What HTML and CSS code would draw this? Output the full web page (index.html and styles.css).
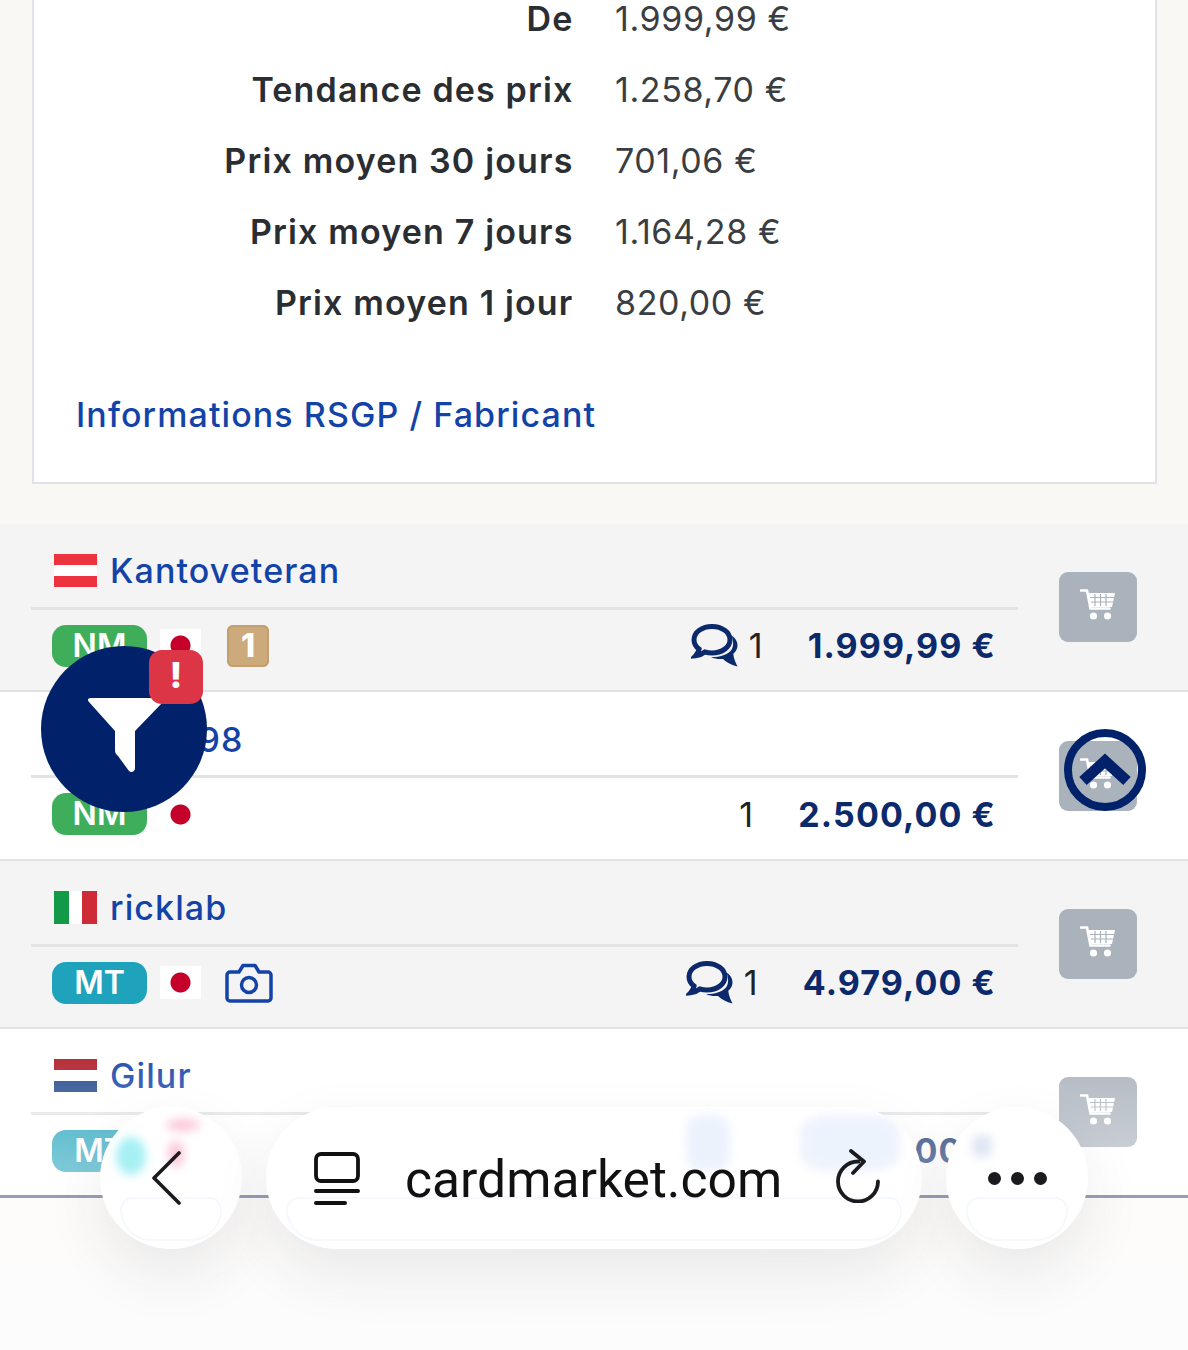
FILE: index.html
```html
<!DOCTYPE html>
<html lang="fr">
<head>
<meta charset="utf-8">
<title>Cardmarket</title>
<link rel="stylesheet" href="styles.css">
</head>
<body>
<svg class="defs" width="0" height="0" aria-hidden="true">
  <symbol id="cart" viewBox="0 0 36 34">
    <path d="M1 3.500h6l3.500 18h19" fill="none" stroke="currentColor" stroke-width="2.600" stroke-linecap="round"/>
    <path d="M8 6h27l-3 14H10.500z" fill="currentColor"/>
    <path d="M10 10.500h24M11 15h22M15 7v12M20.500 7v12M26 7v12" stroke="#aab2bc" stroke-width="1.200"/>
    <circle cx="13.500" cy="29" r="3.600" fill="currentColor"/>
    <circle cx="27.500" cy="29" r="3.600" fill="currentColor"/>
  </symbol>
  <symbol id="chat" viewBox="0 0 48 44">
    <path d="M21 2.500c10 0 18 5.800 18 13.200S31 29 21 29c-2.600 0-5-.4-7.200-1-2.500 2-5.500 3.400-9.300 3.800 1.800-2 3.200-4.300 3.600-6.700C4.800 22.700 3 19.400 3 15.700 3 8.300 11 2.500 21 2.500z" fill="none" stroke="currentColor" stroke-width="5"/>
    <path d="M40.500 11.500c4 2.600 6 6 6 9.700 0 3.300-1.600 6.200-4.200 8.500.3 3.800 1.700 8 4.200 12.800-6-1.300-10.800-4-14.500-7.500-4.500.4-8.500-.3-12-2 8 .2 15-1.500 19.500-6 3-3.200 3.500-9 1-15.500z" fill="currentColor"/>
  </symbol>
</svg>

<section class="card">
  <dl class="prices">
    <dt>De</dt><dd>1.999,99 €</dd>
    <dt>Tendance des prix</dt><dd>1.258,70 €</dd>
    <dt>Prix moyen 30 jours</dt><dd>701,06 €</dd>
    <dt>Prix moyen 7 jours</dt><dd>1.164,28 €</dd>
    <dt>Prix moyen 1 jour</dt><dd>820,00 €</dd>
  </dl>
  <a class="rsgp" href="#">Informations RSGP / Fabricant</a>
</section>

<main class="offers">
  <article class="offer shaded">
    <div class="offer-main">
      <div class="seller"><span class="flag flag-at"></span><a href="#">Kantoveteran</a></div>
      <div class="details">
        <span class="cond nm">NM</span><span class="jp"></span>
        <span class="first-ed">1</span>
        <span class="meta"><svg class="chat"><use href="#chat"/></svg><span class="qty">1</span><b class="price">1.999,99 €</b></span>
      </div>
    </div>
    <button class="buy" aria-label="Ajouter au panier"><svg class="cart"><use href="#cart"/></svg></button>
  </article>

  <article class="offer">
    <div class="offer-main">
      <div class="seller"><span class="flag flag-de"></span><a href="#">Hoke98</a></div>
      <div class="details">
        <span class="cond nm">NM</span><span class="jp"></span>
        <span class="meta"><span class="qty">1</span><b class="price">2.500,00 €</b></span>
      </div>
    </div>
    <button class="buy" aria-label="Ajouter au panier"><svg class="cart"><use href="#cart"/></svg></button>
  </article>

  <article class="offer shaded">
    <div class="offer-main">
      <div class="seller"><span class="flag flag-it"></span><a href="#">ricklab</a></div>
      <div class="details">
        <span class="cond mt">MT</span><span class="jp"></span>
        <svg class="camera" viewBox="0 0 48 40" aria-hidden="true"><path d="M5 9h9l4-6.500h12L34 9h9a3 3 0 0 1 3 3v23a3 3 0 0 1-3 3H5a3 3 0 0 1-3-3V12a3 3 0 0 1 3-3z" fill="none" stroke="currentColor" stroke-width="3.500" stroke-linejoin="round"/><circle cx="24" cy="22" r="7.500" fill="none" stroke="currentColor" stroke-width="3.500"/></svg>
        <span class="meta"><svg class="chat"><use href="#chat"/></svg><span class="qty">1</span><b class="price">4.979,00 €</b></span>
      </div>
    </div>
    <button class="buy" aria-label="Ajouter au panier"><svg class="cart"><use href="#cart"/></svg></button>
  </article>

  <article class="offer last">
    <div class="offer-main">
      <div class="seller"><span class="flag flag-nl"></span><a href="#">Gilur</a></div>
      <div class="details">
        <span class="cond mt">MT</span><span class="jp"></span>
        <span class="meta"><span class="price price-ghost">4.999,00 €</span></span>
      </div>
    </div>
    <button class="buy" aria-label="Ajouter au panier"><svg class="cart"><use href="#cart"/></svg></button>
  </article>
</main>

<button class="fab-filter" aria-label="Filtres">
  <svg viewBox="0 0 166 166" aria-hidden="true"><path d="M50 52h70c3 0 4 2 2 4L94 85v37c0 4-4 5-6 3L77 110c-2-2-3-3-3-6V85L48 56c-2-2-1-4 2-4z" fill="#fff"/></svg>
  <span class="alert">!</span>
</button>
<button class="fab-top" aria-label="Haut de page">
  <svg viewBox="0 0 66 66" aria-hidden="true"><path d="M11 44l22-20 22 20" fill="none" stroke="currentColor" stroke-width="11"/></svg>
</button>

<div class="browser-fade"></div>
<nav class="browser-bar">
  <button class="glass round" aria-label="Retour">
    <span class="tint cyan"></span><span class="tint pink"></span><span class="tint pink2"></span>
    <span class="rim"></span>
    <svg class="ico back" viewBox="0 0 30 54"><path d="M28 2L3 27l25 25" fill="none" stroke="#1b1b1f" stroke-width="3.600" stroke-linecap="round" stroke-linejoin="round"/></svg>
  </button>
  <div class="glass address">
    <span class="smear s1"></span><span class="smear s2"></span>
    <span class="rim"></span>
    <svg class="ico tabs" viewBox="0 0 46 54"><path d="M7 2h32a5 5 0 0 1 5 5v17a5 5 0 0 1-5 5H7a5 5 0 0 1-5-5V7a5 5 0 0 1 5-5z" fill="none" stroke="#111" stroke-width="3.800"/><path d="M2 39h42M2 51h29" fill="none" stroke="#111" stroke-width="4" stroke-linecap="round"/></svg>
    <span class="url">cardmarket.com</span>
    <svg class="ico reload" viewBox="0 0 46 54"><path d="M24.500 12.500a20 20 0 1 0 19.500 20" fill="none" stroke="#1b1b1f" stroke-width="3.800" stroke-linecap="round"/><path d="M17 2l13 10.500L19 24" fill="none" stroke="#1b1b1f" stroke-width="3.800" stroke-linecap="round" stroke-linejoin="round"/></svg>
  </div>
  <button class="glass round" aria-label="Plus">
    <span class="smear s3"></span>
    <span class="rim"></span>
    <span class="dots"><i></i><i></i><i></i></span>
  </button>
</nav>
</body>
</html>
```

FILE: styles.css
```css
* { box-sizing: border-box; }
html, body { margin: 0; height: 1350px; overflow: hidden; }
body {
  position: relative;
  background: #f9f8f4;
  font-family: Inter, "Liberation Sans", sans-serif;
  color: #2b2f33;
}
.defs { position: absolute; }
a { text-decoration: none; color: #1443a8; }
button { border: 0; padding: 0; font: inherit; background: none; }

.card {
  margin: -16.500px 31px 0 32px;
  height: 500.500px;
  background: #fff;
  border: 2px solid #dfe3e8;
  border-top: 0;
  padding: 0 0 0 42px;
}
.prices {
  margin: 0;
  display: grid;
  grid-template-columns: 497.500px 1fr;
  grid-auto-rows: 70.900px;
  column-gap: 41.500px;
  align-items: center;
  font-size: 34px;
  letter-spacing: 1.150px;
}
.prices dt { font-weight: 600; text-align: right; color: #2a2e32; }
.prices dd { margin: 0; color: #3a3e42; letter-spacing: 0.600px; }
.rsgp {
  display: block;
  margin-top: 53.500px;
  font-size: 34px;
  font-weight: 500;
  letter-spacing: 1.080px;
  line-height: 48px;
}

.offers { margin-top: 40px; background: #fff; }
.offer {
  display: flex;
  align-items: center;
  height: 168.400px;
  padding: 0 51px 0 31px;
  border-bottom: 2px solid #dfe3e6;
  background: #fff;
}
.offer.shaded { background: #f4f4f5; }
.offer.last { border-bottom: 3px solid #2e3a6c; }
.offer-main { width: 987px; }
.seller {
  display: flex;
  align-items: center;
  gap: 13px;
  height: 77.300px;
  padding: 2px 0 0 23px;
  border-bottom: 3px solid #e1e3e5;
  font-size: 34px;
  font-weight: 500;
  letter-spacing: 1.100px;
}
.flag { width: 43px; height: 33px; display: block; }
.flag-at { background: linear-gradient(#ee3340 33%, #fff 33% 66%, #ee3340 66%); }
.flag-de { background: linear-gradient(#111 33%, #d00 33% 66%, #fc0 66%); }
.flag-it { background: linear-gradient(90deg, #129a49 35%, #fff 35% 65%, #ce2b37 65%); }
.flag-nl { background: linear-gradient(#ae1c28 33%, #fff 33% 66%, #21468b 66%); }

.details {
  display: flex;
  align-items: center;
  height: 72px;
  padding: 0 22px 0 21px;
}
.cond {
  width: 95px;
  height: 42px;
  border-radius: 14px;
  color: #fff;
  font-size: 32px;
  font-weight: 600;
  line-height: 42px;
  text-align: center;
}
.nm { background: #3fae5a; }
.mt { background: #1fa2bb; }
.jp {
  width: 41px;
  height: 33px;
  margin: 0 0 0 13px;
  background: radial-gradient(circle at center, #c4002b 9.500px, #fff 10.500px);
}
.first-ed {
  width: 42px;
  height: 42px;
  margin-left: 26px;
  border-radius: 6px;
  background: #cdaa7c;
  box-shadow: inset 0 0 0 2px #c49f6e;
  color: #fff;
  font-size: 32px;
  font-weight: 800;
  line-height: 42px;
  text-align: center;
}
.camera { width: 48px; height: 40px; margin-left: 24px; color: #1443a8; }
.meta { margin-left: auto; display: flex; align-items: center; }
.chat { width: 48px; height: 44px; color: #0c2a6b; }
.qty { width: 35px; padding-left: 10px; font-size: 34px; color: #222; }
.price {
  margin-left: 34px;
  font-size: 34px;
  font-weight: 700;
  letter-spacing: 1.100px;
  color: #0c2a6b;
}
.buy {
  display: flex;
  align-items: center;
  justify-content: center;
  width: 78px;
  height: 70px;
  margin-left: 41px;
  border-radius: 9px;
  background: #aab2bc;
  padding-bottom: 6px;
}
.cart { width: 36px; height: 34px; color: #fff; }

.fab-filter {
  position: absolute;
  left: 41px;
  top: 646px;
  width: 166px;
  height: 166px;
  border-radius: 50%;
  background: #01226b;
}
.fab-filter svg { display: block; width: 166px; height: 166px; }
.alert {
  position: absolute;
  left: 108px;
  top: 4px;
  width: 54px;
  height: 54px;
  border-radius: 13px;
  background: #dc3545;
  color: #fff;
  font-size: 36px;
  font-weight: 800;
  line-height: 50px;
  text-align: center;
}
.fab-top {
  position: absolute;
  left: 1064px;
  top: 729px;
  width: 82px;
  height: 82px;
  border: 8px solid #01226b;
  border-radius: 50%;
  color: #01226b;
}
.fab-top svg { display: block; width: 66px; height: 66px; }

.browser-fade {
  position: absolute;
  left: 0;
  right: 0;
  top: 1030px;
  height: 320px;
  background: linear-gradient(rgba(255,255,255,0) 0, rgba(255,255,255,.5) 165px, rgba(252,252,253,.96) 320px);
}
.browser-bar {
  position: absolute;
  left: 100px;
  top: 1107px;
  display: flex;
  gap: 24px;
}
.glass {
  position: relative;
  height: 142px;
  border-radius: 71px;
  background: #fff;
  box-shadow: 0 24px 60px rgba(40,40,60,.09);
  overflow: hidden;
}
.round { width: 142px; display: flex; align-items: center; justify-content: center; }
.rim {
  position: absolute;
  left: 20px;
  right: 20px;
  top: 90px;
  bottom: 8px;
  border: 2px solid #f5f8fd;
  border-radius: 20px 20px 50px 50px;
}
.address { width: 656px; display: flex; align-items: center; padding-left: 48px; }
.ico { position: relative; flex: none; display: block; }
.back { width: 30px; height: 54px; margin-left: -11px; }
.tabs { width: 46px; height: 54px; margin-top: 2px; }
.url {
  position: relative;
  margin-top: 3px;
  margin-left: 45px;
  width: 377px;
  font-family: Roboto, Inter, sans-serif;
  font-size: 51.600px;
  color: #111;
  white-space: nowrap;
}
.reload { width: 46px; height: 54px; margin-left: 52px; margin-top: -4px; }
.dots { position: relative; display: flex; gap: 10px; }
.dots i { width: 13px; height: 13px; border-radius: 50%; background: #1b1b1f; }

.tint, .smear { position: absolute; filter: blur(5px); border-radius: 50%; }
.cyan { left: 16px; top: 30px; width: 30px; height: 38px; background: #a6f0f4; }
.pink { left: 66px; top: 12px; width: 34px; height: 12px; background: #fbc6d8; }
.pink2 { left: 68px; top: 34px; width: 16px; height: 26px; background: #fbc6d8; }
.smear { opacity: .55; border-radius: 30%; }
.s1 { left: 420px; top: 8px; width: 44px; height: 56px; background: #dce8fb; }
.s2 { left: 534px; top: 8px; width: 100px; height: 56px; background: #dfe9fa; }
.s3 { left: 26px; top: 28px; width: 20px; height: 22px; background: #c5d2ea; }
```
